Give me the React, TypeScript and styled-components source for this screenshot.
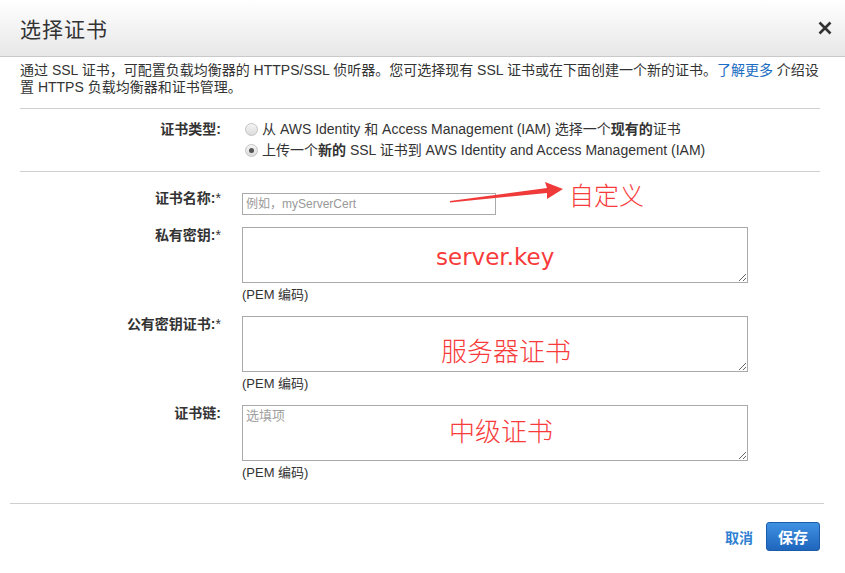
import styled, { createGlobalStyle } from 'styled-components';

const GlobalStyle = createGlobalStyle`
	html, body {
		margin: 0;
		padding: 0;
		background: #fff;
	}
	body {
		font-family: "Liberation Sans", "Noto Sans CJK SC", sans-serif;
		color: #333;
	}
`;

const Dialog = styled.div`
	width: 845px;
	height: 573px;
	background: #fff;
	overflow: hidden;
`;

const Header = styled.div`
	display: flex;
	justify-content: space-between;
	align-items: center;
	height: 56px;
	padding: 0 13px 0 20px;
	background: linear-gradient(#ffffff, #e7e7e7);
	border-bottom: 1px solid #c9c9c9;
`;

const Title = styled.h1`
	margin: 0;
	font-size: 21px;
	font-weight: normal;
	color: #333;
	letter-spacing: 1px;
`;

const CloseButton = styled.button`
	display: flex;
	padding: 0;
	border: 0;
	background: none;
	cursor: pointer;
`;

const Body = styled.div`
	padding: 5px 25px 0 20px;
`;

const Intro = styled.p`
	margin: 0;
	width: 799px;
	font-size: 14px;
	line-height: 17px;
	line-break: anywhere;
`;

const Link = styled.a`
	color: #1a6dc2;
	text-decoration: none;
`;

const Divider = styled.hr<{ $top?: number }>`
	margin: ${(p) => p.$top ?? 0}px 0 0;
	border: 0;
	border-top: 1px solid #cfcfcf;
`;

const Grid = styled.div<{ $pad: string; $gap?: number }>`
	display: grid;
	grid-template-columns: 201px 506px;
	column-gap: 21px;
	row-gap: ${(p) => p.$gap ?? 0}px;
	padding: ${(p) => p.$pad};
`;

const Label = styled.label<{ $line?: number; $shift?: number }>`
	text-align: right;
	font-size: 14px;
	font-weight: bold;
	line-height: ${(p) => p.$line ?? 17}px;
	margin-top: ${(p) => p.$shift ?? 0}px;
	color: #333;
`;

const Required = styled.span`
	font-weight: normal;
	color: #333;
`;

const RadioList = styled.div`
	display: flex;
	flex-direction: column;
	padding-left: 3px;
`;

const RadioRow = styled.div`
	display: flex;
	align-items: center;
	gap: 4px;
	font-size: 14px;
	line-height: 21px;
`;

const RadioDot = styled.span<{ $checked?: boolean }>`
	position: relative;
	width: 11px;
	height: 11px;
	border-radius: 50%;
	border: 1px solid #c4c4c4;
	background: linear-gradient(#f4f4f4, #dcdcdc);
	flex-shrink: 0;

	&::after {
		content: '';
		display: ${(p) => (p.$checked ? 'block' : 'none')};
		position: absolute;
		left: 3px;
		top: 3px;
		width: 5px;
		height: 5px;
		border-radius: 50%;
		background: #555;
	}
`;

const Field = styled.div`
	position: relative;
`;

const TextInput = styled.input`
	display: block;
	box-sizing: border-box;
	width: 254px;
	height: 22px;
	margin: 0;
	padding: 0 3px;
	border: 1px solid #aaa;
	font-family: inherit;
	font-size: 12px;
	color: #333;

	&::placeholder {
		color: #999;
	}
`;

const TextArea = styled.textarea`
	display: block;
	box-sizing: border-box;
	width: 506px;
	height: 56px;
	margin: 0;
	padding: 2px 3px;
	border: 1px solid #aaa;
	font-family: inherit;
	font-size: 13px;
	line-height: 16px;
	color: #333;

	&::placeholder {
		color: #a0a0a0;
	}
`;

const Note = styled.div`
	padding-top: 3px;
	font-size: 13px;
	line-height: 18px;
	color: #333;
`;

const Annotation = styled.span<{ $left: number; $top: number; $size: number; $latin?: boolean }>`
	position: absolute;
	left: ${(p) => p.$left}px;
	top: ${(p) => p.$top}px;
	font-family: ${(p) =>
		p.$latin ? '"DejaVu Sans", sans-serif' : '"Noto Sans CJK SC", sans-serif'};
	font-size: ${(p) => p.$size}px;
	line-height: 30px;
	font-weight: ${(p) => (p.$latin ? 400 : 300)};
	color: #f83a3a;
	white-space: nowrap;
	pointer-events: none;
`;

const Arrow = styled.svg`
	position: absolute;
	left: 206px;
	top: -15px;
	overflow: visible;
`;

const Footer = styled.div`
	display: flex;
	justify-content: flex-end;
	align-items: center;
	gap: 13px;
	margin: 21px 21px 0 10px;
	padding: 18px 4px 0 0;
	border-top: 1px solid #cfcfcf;
`;

const CancelLink = styled.a`
	font-size: 14px;
	font-weight: bold;
	color: #2f7fd2;
	text-decoration: none;
	cursor: pointer;
`;

const SaveButton = styled.button`
	height: 29px;
	padding: 0 11px;
	border: 1px solid #1b5ba9;
	border-radius: 3px;
	background: linear-gradient(#3f92e2, #2f7bd0 50%, #1f66bd);
	font-family: inherit;
	font-size: 15px;
	font-weight: bold;
	color: #fff;
	cursor: pointer;
`;

type TextFieldProps = {
	label: string;
	required?: boolean;
	placeholder?: string;
	note: string;
	annotation: string;
	left: number;
	top: number;
	latin?: boolean;
};

const TextAreaRow = ({ label, required, placeholder, note, annotation, left, top, latin }: TextFieldProps) => (
	<>
		<Label>
			{label}
			{required && <Required>*</Required>}
		</Label>
		<Field>
			<TextArea placeholder={placeholder} />
			<Annotation $left={left} $top={top} $size={latin ? 23 : 26} $latin={latin}>
				{annotation}
			</Annotation>
			<Note>{note}</Note>
		</Field>
	</>
);

export default function App() {
	return (
		<>
			<GlobalStyle />
			<Dialog>
				<Header>
					<Title>选择证书</Title>
					<CloseButton aria-label="close">
						<svg width="14" height="14" viewBox="0 0 14 14">
							<path d="M1.5 1.5 L12.5 12.5 M12.5 1.5 L1.5 12.5" stroke="#333" strokeWidth="2.6" />
						</svg>
					</CloseButton>
				</Header>
				<Body>
					<Intro>
						通过 SSL 证书，可配置负载均衡器的 HTTPS/SSL 侦听器。您可选择现有 SSL 证书或在下面创建一个新的证书。
						<Link href="#">了解更多</Link> 介绍设<wbr />置 HTTPS 负载均衡器和证书管理。
					</Intro>
					<Divider $top={12} />
					<Grid $pad="10px 0">
						<Label $line={21}>证书类型:</Label>
						<RadioList>
							<RadioRow>
								<RadioDot />
								<span>
									从 AWS Identity 和 Access Management (IAM) 选择一个<b>现有的</b>证书
								</span>
							</RadioRow>
							<RadioRow>
								<RadioDot $checked />
								<span>
									上传一个<b>新的</b> SSL 证书到 AWS Identity and Access Management (IAM)
								</span>
							</RadioRow>
						</RadioList>
					</Grid>
					<Divider />
					<Grid $pad="21px 0 0" $gap={12}>
						<Label $shift={-3}>
							证书名称:<Required>*</Required>
						</Label>
						<Field>
							<TextInput placeholder="例如，myServerCert" />
							<Arrow width="116" height="26" viewBox="0 0 116 26">
								<polygon points="2,23 99,10 97,4 115,11 99,21 99,15 2,24.5" fill="#f03a3a" />
							</Arrow>
							<Annotation $left={327} $top={-14} $size={25}>
								自定义
							</Annotation>
						</Field>
						<TextAreaRow label="私有密钥:" required note="(PEM 编码)" annotation="server.key" left={194} top={15} latin />
						<TextAreaRow label="公有密钥证书:" required note="(PEM 编码)" annotation="服务器证书" left={199} top={19} />
						<TextAreaRow label="证书链:" placeholder="选填项" note="(PEM 编码)" annotation="中级证书" left={207} top={10} />
					</Grid>
				</Body>
				<Footer>
					<CancelLink>取消</CancelLink>
					<SaveButton>保存</SaveButton>
				</Footer>
			</Dialog>
		</>
	);
}
